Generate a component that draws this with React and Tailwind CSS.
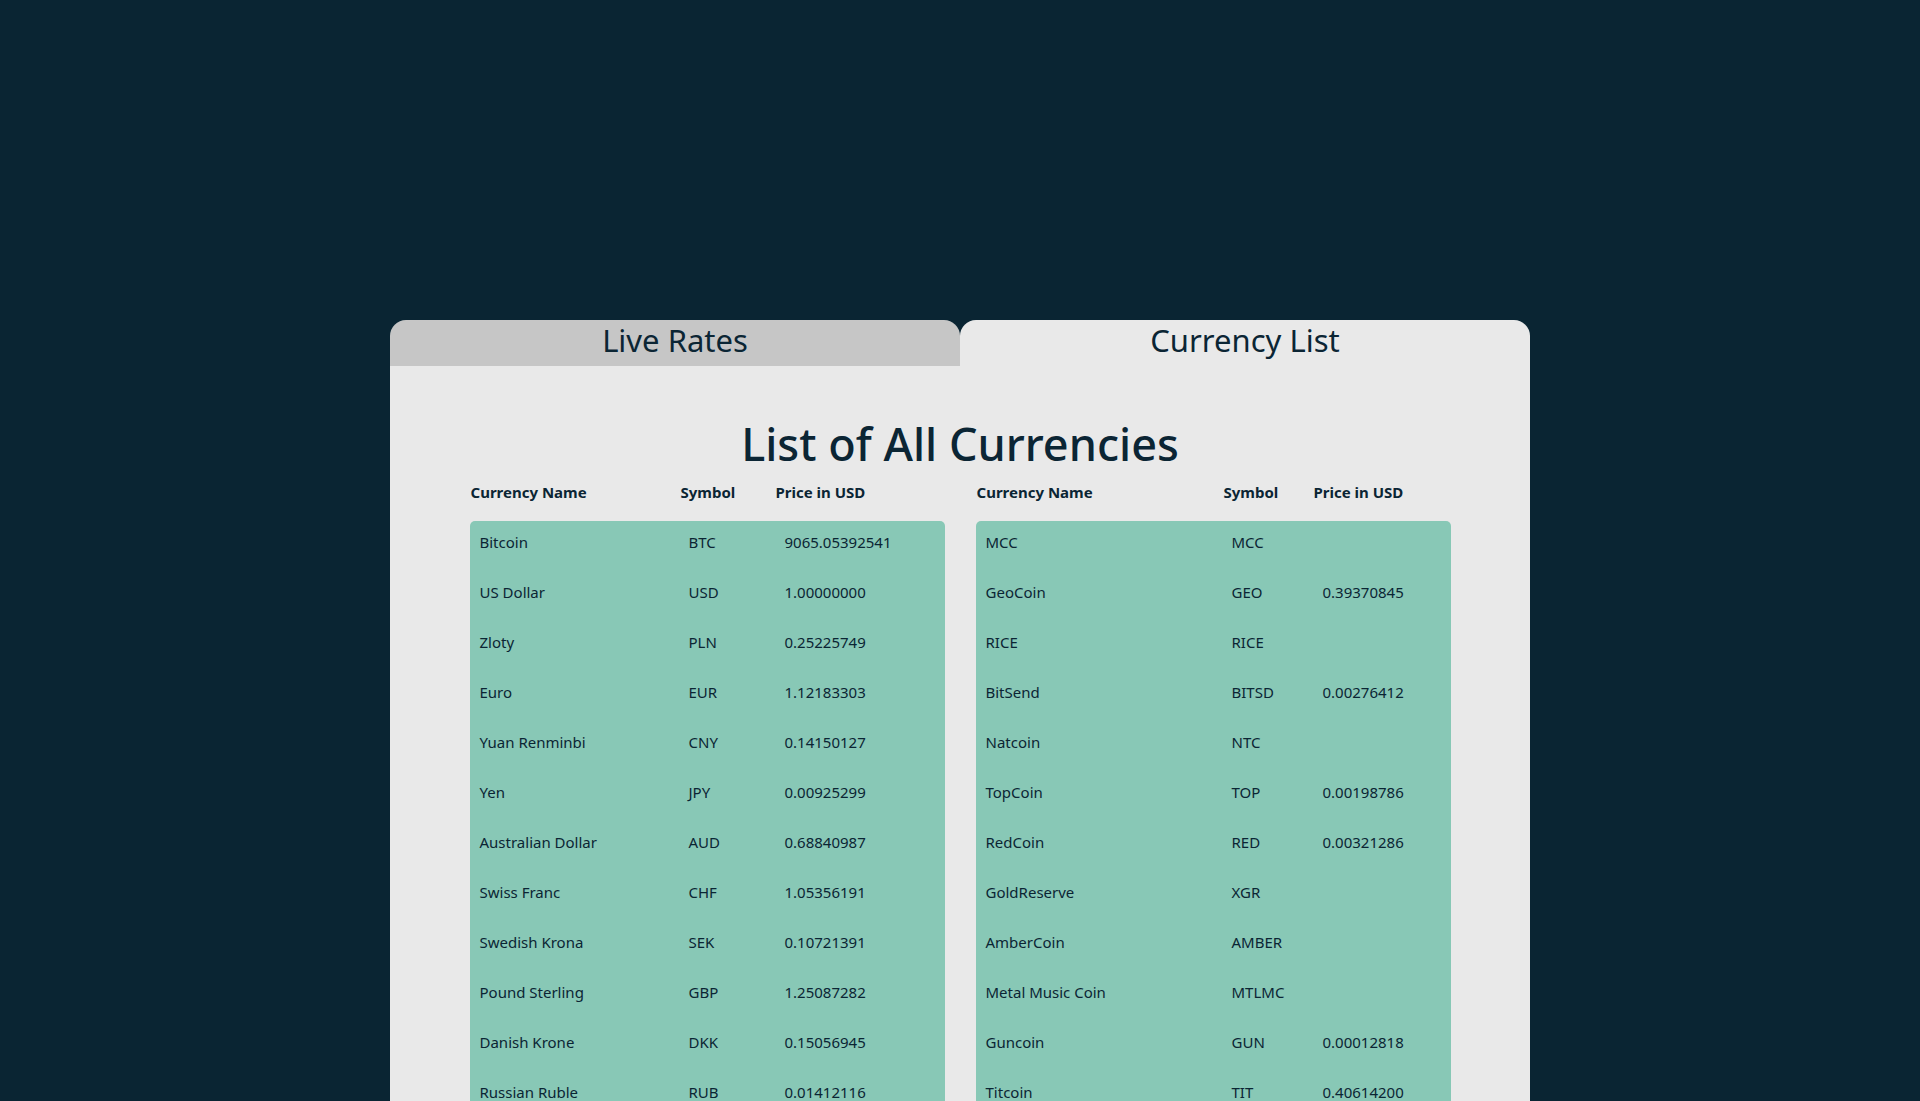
const left = [
  ['Bitcoin', 'BTC', '9065.05392541'],
  ['US Dollar', 'USD', '1.00000000'],
  ['Zloty', 'PLN', '0.25225749'],
  ['Euro', 'EUR', '1.12183303'],
  ['Yuan Renminbi', 'CNY', '0.14150127'],
  ['Yen', 'JPY', '0.00925299'],
  ['Australian Dollar', 'AUD', '0.68840987'],
  ['Swiss Franc', 'CHF', '1.05356191'],
  ['Swedish Krona', 'SEK', '0.10721391'],
  ['Pound Sterling', 'GBP', '1.25087282'],
  ['Danish Krone', 'DKK', '0.15056945'],
  ['Russian Ruble', 'RUB', '0.01412116'],
];

const right = [
  ['MCC', 'MCC', ''],
  ['GeoCoin', 'GEO', '0.39370845'],
  ['RICE', 'RICE', ''],
  ['BitSend', 'BITSD', '0.00276412'],
  ['Natcoin', 'NTC', ''],
  ['TopCoin', 'TOP', '0.00198786'],
  ['RedCoin', 'RED', '0.00321286'],
  ['GoldReserve', 'XGR', ''],
  ['AmberCoin', 'AMBER', ''],
  ['Metal Music Coin', 'MTLMC', ''],
  ['Guncoin', 'GUN', '0.00012818'],
  ['Titcoin', 'TIT', '0.40614200'],
];

const CurrencyTable = ({ rows, cols }) => {
    return (
        <div className="w-[475px]">
            <div className={`grid ${cols} h-[50px] items-center text-[15px] font-bold`}>
                <span className="pl-[1px]">Currency Name</span>
                <span className="pl-[2px]">Symbol</span>
                <span className="pl-[1px]">Price in USD</span>
            </div>
            <div className="bg-[#88c8b6] rounded-[5px] px-[10px] mt-[4px]">
                {rows.map((r) => (
                    <div key={r[0]} className={`grid ${cols} h-[50px] pt-[11px] text-[15px] leading-[20px]`}>
                        <span>{r[0]}</span>
                        <span>{r[1]}</span>
                        <span>{r[2]}</span>
                    </div>
                ))}
            </div>
        </div>
    );
};

const App = () => {
    return (
        <div
            className="min-h-screen bg-[#0a2533] text-[#0b2534] pt-[320px] overflow-hidden"
            style={{ fontFamily: '"Noto Sans", "Open Sans", sans-serif' }}
        >
            <div className="w-[1140px] mx-auto">
                <div className="flex h-[46px]">
                    <button className="flex-1 bg-[#c6c6c6] rounded-t-[16px] text-[31px] leading-[38px] pb-[7px] text-[#0b2534]">
                        Live Rates
                    </button>
                    <button className="flex-1 bg-[#e9e9e9] rounded-t-[16px] text-[31px] leading-[38px] pb-[7px] text-[#0b2534]">
                        Currency List
                    </button>
                </div>
                <div className="bg-[#e9e9e9] pt-[48px] pb-10">
                    <h1 className="text-center text-[45px] leading-[60px] font-medium">List of All Currencies</h1>
                    <div className="flex justify-center gap-[31px] mt-[-7px]">
                        <CurrencyTable rows={left} cols="grid-cols-[209px_96px_1fr]" />
                        <CurrencyTable rows={right} cols="grid-cols-[246px_91px_1fr]" />
                    </div>
                </div>
            </div>
        </div>
    );
};

export default App;
